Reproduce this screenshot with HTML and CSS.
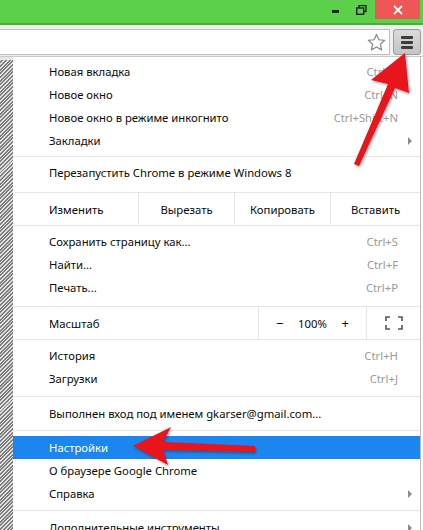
FILE: index.html
```html
<!DOCTYPE html>
<html>
<head>
    <title>Chrome menu</title>
    <link rel="stylesheet" href="styles.css">
</head>
<body>
    <div class="window">
        <div class="titlebar">
            <span class="win-btn"><span class="min-bar"></span></span>
            <span class="win-btn">
                <svg width="11" height="10" viewBox="0 0 11 10">
                    <rect x="3" y="0.5" width="7" height="6" fill="none" stroke="#222" stroke-width="1.4"/>
                    <rect x="0.7" y="3" width="7" height="6.3" fill="#5ccf4b" stroke="#222" stroke-width="1.4"/>
                </svg>
            </span>
            <span class="close-btn">
                <svg width="10" height="10" viewBox="0 0 10 10">
                    <path d="M1 1L9 9M9 1L1 9" stroke="#fff" stroke-width="1.8"/>
                </svg>
            </span>
        </div>

        <div class="toolbar">
            <div class="omnibox">
                <svg class="star" width="19" height="19" viewBox="0 0 20 20">
                    <path d="M10 1.5l2.6 5.6 6 .6-4.5 4.1 1.3 6-5.4-3.1-5.4 3.1 1.3-6L1.4 7.7l6-.6z" fill="#fff" stroke="#8a8a8a" stroke-width="1.3" stroke-linejoin="round"/>
                </svg>
            </div>
            <div class="menu-btn">
                <span></span><span></span><span></span>
            </div>
        </div>

        <div class="main">
            <div class="hatch"></div>
            <div class="menu">
                <div class="item"><span>Новая вкладка</span><span class="shortcut">Ctrl+T</span></div>
                <div class="item"><span>Новое окно</span><span class="shortcut">Ctrl+N</span></div>
                <div class="item"><span>Новое окно в режиме инкогнито</span><span class="shortcut">Ctrl+Shift+N</span></div>
                <div class="item has-sub"><span>Закладки</span><span class="sub-arrow"></span></div>
                <div class="sep"></div>
                <div class="item"><span>Перезапустить Chrome в режиме Windows 8</span></div>

                <div class="edit-row">
                    <span class="cell first">Изменить</span>
                    <span class="cell">Вырезать</span>
                    <span class="cell">Копировать</span>
                    <span class="cell last">Вставить</span>
                </div>

                <div class="group">
                    <div class="item"><span>Сохранить страницу как...</span><span class="shortcut">Ctrl+S</span></div>
                    <div class="item"><span>Найти...</span><span class="shortcut">Ctrl+F</span></div>
                    <div class="item"><span>Печать...</span><span class="shortcut">Ctrl+P</span></div>
                </div>

                <div class="zoom-row">
                    <span class="zoom-label">Масштаб</span>
                    <span class="zoom-ctrl">
                        <span class="zoom-sign">&minus;</span>
                        <span class="zoom-value">100%</span>
                        <span class="zoom-sign">+</span>
                    </span>
                    <span class="fullscreen">
                        <svg width="18" height="14" viewBox="0 0 18 14">
                            <path d="M1 5V1h4M13 1h4v4M17 9v4h-4M5 13H1V9" fill="none" stroke="#555" stroke-width="1.6"/>
                        </svg>
                    </span>
                </div>

                <div class="group">
                    <div class="item"><span>История</span><span class="shortcut">Ctrl+H</span></div>
                    <div class="item"><span>Загрузки</span><span class="shortcut">Ctrl+J</span></div>
                </div>
                <div class="sep wide"></div>
                <div class="item"><span>Выполнен вход под именем gkarser@gmail.com...</span></div>
                <div class="sep wide"></div>
                <div class="item active"><span>Настройки</span></div>
                <div class="item"><span>О браузере Google Chrome</span></div>
                <div class="item has-sub"><span>Справка</span><span class="sub-arrow"></span></div>
                <div class="sep wide"></div>
                <div class="item has-sub"><span>Дополнительные инструменты</span><span class="sub-arrow"></span></div>
            </div>
        </div>

        <svg class="arrows" width="423" height="530" viewBox="0 0 423 530">
            <defs>
                <filter id="shade" x="-20%" y="-20%" width="140%" height="140%">
                    <feDropShadow dx="1" dy="1.5" stdDeviation="1.2" flood-color="#000" flood-opacity="0.35"/>
                </filter>
            </defs>
            <polygon points="405,53 409,93 395,88 359,166 354,164 388,84 371,80" fill="#e8121a" filter="url(#shade)"/>
            <polygon points="133,446 171,427 163,442 255,446 255,452 163,450 168,465" fill="#e8121a" filter="url(#shade)"/>
        </svg>
    </div>
</body>
</html>
```

FILE: styles.css
```css
body {
    margin: 0;
    background: #fff;
    font-family: 'Noto Sans', 'Open Sans', sans-serif;
    font-size: 11.3px;
    color: #0a0a0a;
}

.window {
    position: relative;
    width: 423px;
    height: 530px;
    overflow: hidden;
}

/* title bar */
.titlebar {
    display: flex;
    justify-content: flex-end;
    align-items: flex-start;
    height: 23px;
    padding-right: 3px;
    background: #5ccf4b;
    border-bottom: 2px solid #44b035;
}

.win-btn {
    display: flex;
    align-items: center;
    justify-content: center;
    width: 26px;
    height: 19px;
}

.min-bar {
    display: block;
    width: 7px;
    height: 3px;
    margin-top: 4px;
    background: #222;
}

.close-btn {
    display: flex;
    align-items: center;
    justify-content: center;
    width: 45px;
    height: 19px;
    margin-left: 1px;
    background: #ef5757;
}

/* toolbar */
.toolbar {
    display: flex;
    gap: 3px;
    height: 26px;
    padding: 4px 2px 1px 0;
    background: #f1f1f1;
    border-bottom: 1px solid #c9c9c9;
}

.omnibox {
    flex: 1;
    display: flex;
    align-items: center;
    justify-content: flex-end;
    margin-left: -1px;
    padding-right: 3px;
    background: #fff;
    border: 1px solid #bdbdbd;
}

.menu-btn {
    display: flex;
    flex-direction: column;
    align-items: center;
    justify-content: center;
    gap: 2px;
    width: 26px;
    background: linear-gradient(#dadada, #c4c4c4);
    border: 1px solid #9c9c9c;
    border-radius: 3px;
}

.menu-btn span {
    display: block;
    width: 12px;
    height: 3px;
    background: #3c3c3c;
    border-radius: 1px;
}

/* menu */
.main {
    display: flex;
    height: 473px;
}

.hatch {
    flex: 0 0 13px;
    background: repeating-linear-gradient(135deg, #e2e2e2 0 1.2px, #7c7c7c 1.2px 2.6px);
    border-top: 3px solid #e6e6e6;
}

.menu {
    flex: 1;
    min-width: 0;
    padding-top: 3px;
    margin-right: 2px;
    border-right: 1px solid #b8b8b8;
}

.item {
    display: flex;
    justify-content: space-between;
    align-items: center;
    height: 23px;
    padding: 0 22px 0 36px;
    white-space: nowrap;
}

.item.has-sub {
    padding-right: 8px;
}

.item.active {
    background: #1b86ef;
    color: #fff;
}

.shortcut {
    color: #9a9a9a;
}

.sub-arrow {
    width: 0;
    height: 0;
    border-top: 4px solid transparent;
    border-bottom: 4px solid transparent;
    border-left: 4px solid #8c8c8c;
}

.sep {
    height: 1px;
    margin: 4px 0;
    background: #e6e6e6;
}

.sep.wide {
    margin: 5px 0;
}

.group {
    margin: 4px 0 6px;
}

.edit-row,
.zoom-row {
    display: flex;
    height: 32px;
    border-top: 1px solid #e6e6e6;
    border-bottom: 1px solid #e6e6e6;
}

.edit-row {
    margin-top: 8px;
}

.cell {
    display: flex;
    align-items: center;
    justify-content: center;
    flex: 0 0 95px;
    border-left: 1px solid #e6e6e6;
}

.cell.first {
    justify-content: flex-start;
    flex: 0 0 125px;
    box-sizing: border-box;
    padding-left: 36px;
    border-left: none;
}

.cell.last {
    flex: 1;
}

.zoom-row {
    margin-top: 7px;
}

.zoom-label {
    display: flex;
    align-items: center;
    flex: 1;
    padding-left: 36px;
}

.zoom-ctrl {
    display: flex;
    align-items: center;
    justify-content: space-between;
    flex: 0 0 108px;
    padding: 0 17px;
    box-sizing: border-box;
    border-left: 1px solid #e6e6e6;
}

.zoom-sign {
    font-size: 13px;
}

.fullscreen {
    display: flex;
    align-items: center;
    justify-content: center;
    flex: 0 0 53px;
    border-left: 1px solid #e6e6e6;
}

.arrows {
    position: absolute;
    top: 0;
    left: 0;
}
```
